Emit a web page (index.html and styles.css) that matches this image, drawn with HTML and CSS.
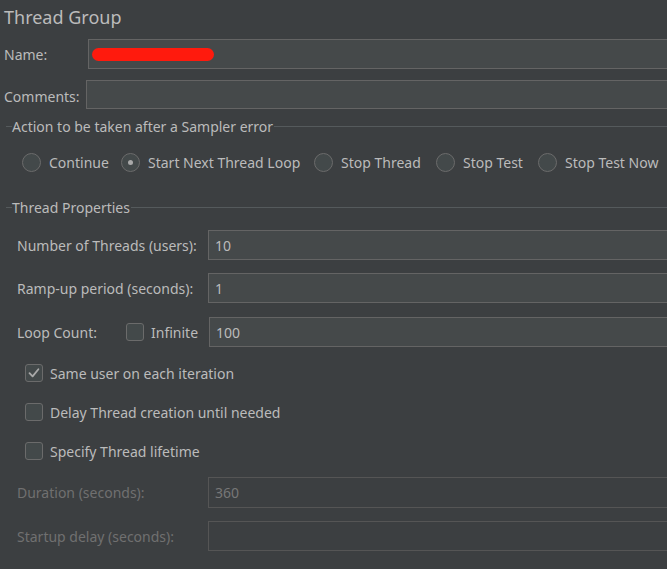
FILE: index.html
```html
<!DOCTYPE html>
<html>
<head>
<meta charset="utf-8">
<link rel="stylesheet" href="styles.css">
</head>
<body>
<div class="panel">
  <div class="title">Thread Group</div>

  <div class="row name-row">
    <label class="lbl name-lbl">Name:</label>
    <div class="field name-field"><span class="scribble"></span></div>
  </div>

  <div class="row comments-row">
    <label class="lbl comments-lbl">Comments:</label>
    <div class="field comments-field"></div>
  </div>

  <div class="group-title action-title">
    <span class="seg"></span><span class="gt-text">Action to be taken after a Sampler error</span><span class="line"></span>
  </div>

  <div class="radios">
    <div class="radio-item"><span class="radio"></span><span class="rl rl-continue">Continue</span></div>
    <div class="radio-item"><span class="radio checked"></span><span class="rl rl-next">Start Next Thread Loop</span></div>
    <div class="radio-item"><span class="radio"></span><span class="rl rl-thread">Stop Thread</span></div>
    <div class="radio-item"><span class="radio"></span><span class="rl rl-test">Stop Test</span></div>
    <div class="radio-item"><span class="radio"></span><span class="rl">Stop Test Now</span></div>
  </div>

  <div class="group-title props-title">
    <span class="seg"></span><span class="gt-text">Thread Properties</span><span class="line"></span>
  </div>

  <div class="props">
    <div class="prow p1">
      <span class="plabel">Number of Threads (users):</span>
      <div class="field pfield">10</div>
    </div>
    <div class="prow p2">
      <span class="plabel">Ramp-up period (seconds):</span>
      <div class="field pfield">1</div>
    </div>
    <div class="prow p3">
      <span class="plabel loop">Loop Count:</span>
      <span class="check"></span>
      <span class="inf">Infinite</span>
      <div class="field pfield">100</div>
    </div>

    <div class="crow c1"><span class="check checked"><svg viewBox="0 0 18 18" width="18" height="18"><path d="M4.5 9.2 L7.6 12.4 L13.4 5.2" fill="none" stroke="#a9a9a9" stroke-width="1.8" stroke-linecap="round" stroke-linejoin="round"/></svg></span><span>Same user on each iteration</span></div>
    <div class="crow c2"><span class="check"></span><span>Delay Thread creation until needed</span></div>
    <div class="crow c3"><span class="check"></span><span>Specify Thread lifetime</span></div>

    <div class="prow d1 disabled">
      <span class="plabel">Duration (seconds):</span>
      <div class="field pfield dis">360</div>
    </div>
    <div class="prow d2 disabled">
      <span class="plabel">Startup delay (seconds):</span>
      <div class="field pfield dis"></div>
    </div>
  </div>
</div>
</body>
</html>
```

FILE: styles.css
```css
html, body {
  margin: 0;
  padding: 0;
  background: #3c3f41;
  overflow: hidden;
}
body {
  width: 667px;
  height: 569px;
  font-family: "Noto Sans", "Open Sans", sans-serif;
  font-size: 14px;
  color: #bbbbbb;
}
.panel {
  display: flex;
  flex-direction: column;
}
.title {
  font-size: 18px;
  height: 34px;
  line-height: 34px;
  padding-left: 4px;
}
.row {
  display: flex;
  align-items: center;
}
.lbl {
  padding-left: 4px;
  box-sizing: border-box;
}
.field {
  box-sizing: border-box;
  background: #45494a;
  border: 1px solid #646464;
  flex: 1;
  margin-right: -20px;
  display: flex;
  align-items: center;
  padding-left: 6px;
}
.name-row {
  margin-top: 5px;
}
.name-lbl {
  width: 88px;
}
.name-field {
  height: 30px;
}
.scribble {
  display: block;
  width: 122px;
  height: 13px;
  margin-left: -3px;
  margin-top: 1px;
  border-radius: 7px;
  background: #ff1a0d;
}
.comments-row {
  margin-top: 11px;
}
.comments-lbl {
  width: 86px;
  padding-top: 4px;
}
.comments-field {
  height: 29px;
}
.group-title {
  display: flex;
  align-items: center;
  height: 20px;
}
.group-title .seg {
  width: 6px;
  margin-left: 6px;
  border-top: 1px solid #555a5c;
}
.group-title .line {
  flex: 1;
  border-top: 1px solid #555a5c;
}
.gt-text {
  padding: 0 1px 0 0;
}
.action-title {
  margin-top: 7px;
}
.radios {
  display: flex;
  align-items: center;
  height: 32px;
  margin-top: 10px;
  padding-left: 22px;
  gap: 14px;
  white-space: nowrap;
}
.radio-item {
  display: flex;
  align-items: center;
  gap: 8px;
}
.rl {
  white-space: nowrap;
}
.rl-continue { width: 58px; }
.rl-next { width: 152px; }
.rl-thread { width: 81px; }
.rl-test { width: 61px; }
.radio {
  box-sizing: border-box;
  width: 19px;
  height: 19px;
  border-radius: 50%;
  border: 1px solid #6b6b6b;
  background: #43494a;
  display: flex;
  align-items: center;
  justify-content: center;
  flex: none;
}
.radio.checked::after {
  content: "";
  width: 5px;
  height: 5px;
  border-radius: 50%;
  background: #a9a9a9;
}
.props-title {
  margin-top: 19px;
}
.props {
  display: flex;
  flex-direction: column;
}
.prow {
  display: flex;
  align-items: center;
}
.plabel {
  width: 191px;
  padding-left: 17px;
  flex: none;
}
.plabel.loop {
  width: 109px;
}
.pfield {
  height: 30px;
}
.p1 { margin-top: 13px; }
.p2 { margin-top: 13px; }
.p3 { margin-top: 14px; }
.check {
  box-sizing: border-box;
  width: 18px;
  height: 18px;
  border: 1px solid #6b6b6b;
  border-radius: 3px;
  background: #43494a;
  flex: none;
  display: flex;
  align-items: center;
  justify-content: center;
}
.check svg {
  display: block;
  margin: -1px;
}
.inf {
  margin-left: 7px;
  width: 58px;
}
.crow {
  display: flex;
  align-items: center;
  gap: 7px;
  padding-left: 25px;
  height: 20px;
}
.c1 { margin-top: 16px; }
.c2 { margin-top: 19px; }
.c3 { margin-top: 19px; }
.disabled {
  color: #707070;
}
.pfield.dis {
  background: #3c3f41;
  border-color: #555555;
  color: #777777;
}
.d1 { margin-top: 16px; }
.d1 .pfield { height: 31px; }
.d2 { margin-top: 13px; }
```
